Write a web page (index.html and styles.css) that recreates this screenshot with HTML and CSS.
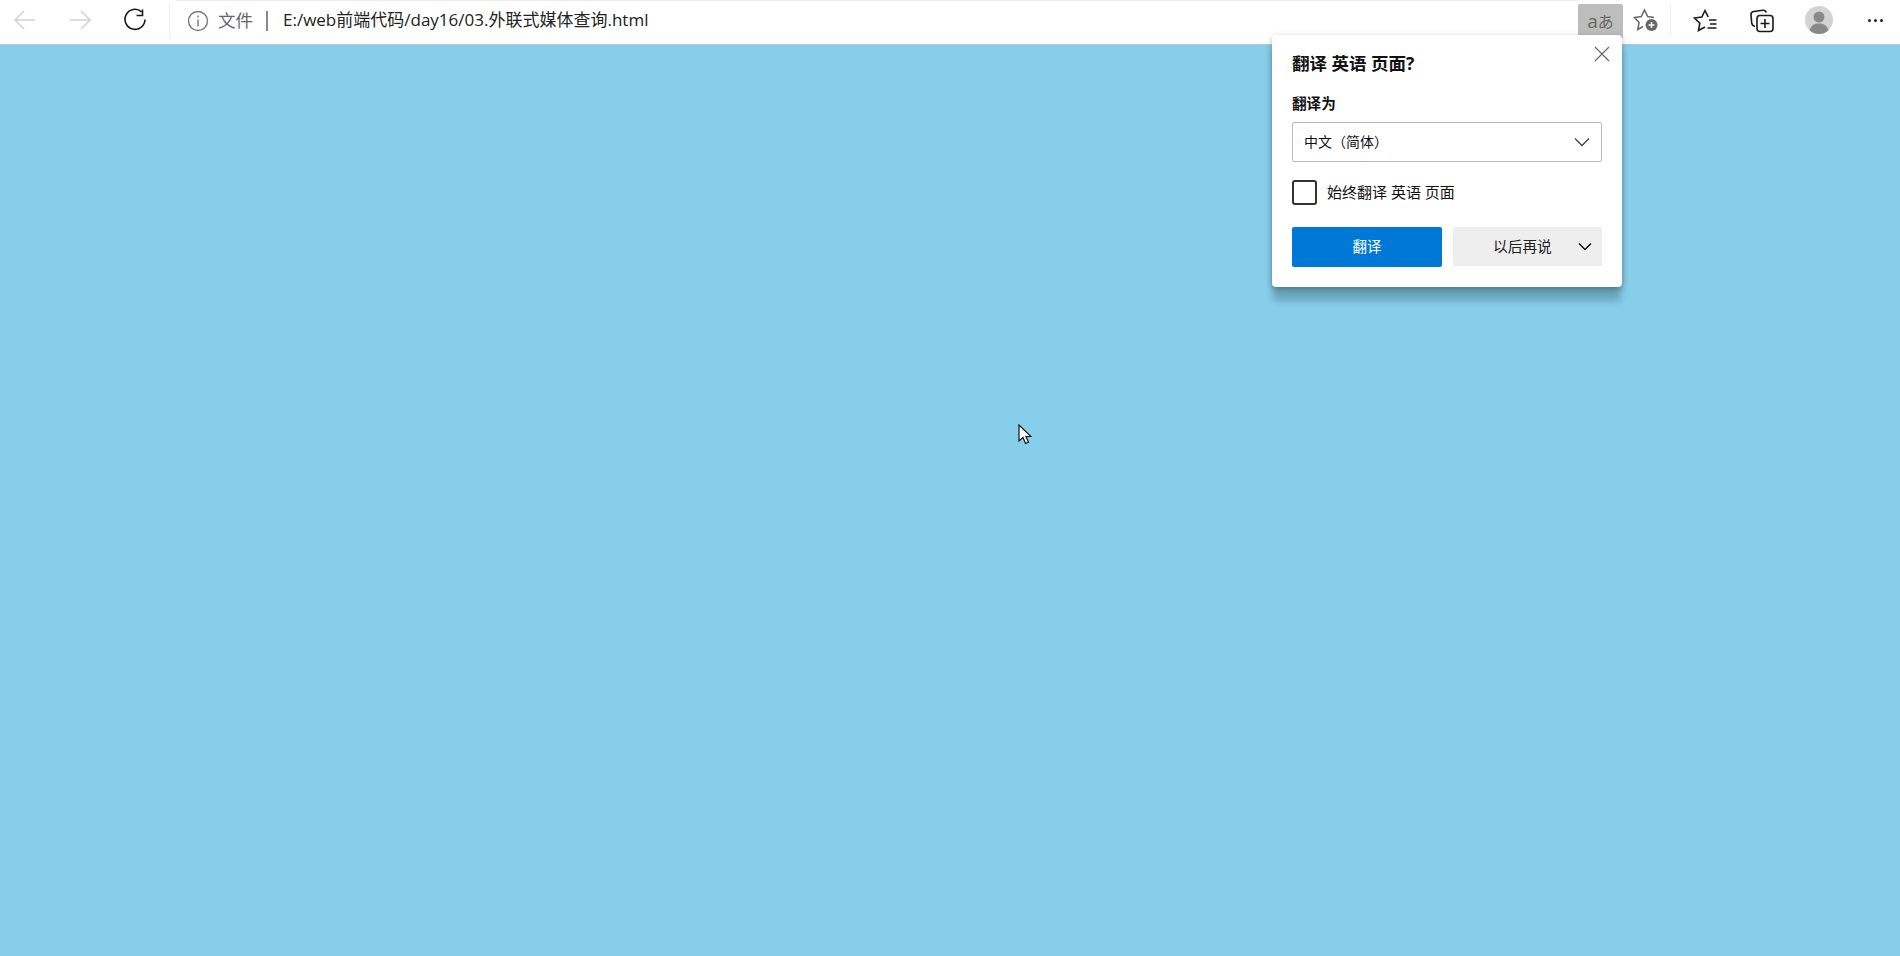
FILE: index.html
```html
<!DOCTYPE html>
<html lang="zh-CN">
<head>
  <meta charset="UTF-8">
  <title>03.外联式媒体查询</title>
  <link rel="stylesheet" href="styles.css">
</head>
<body>
  <header class="toolbar">
    <div class="nav-group">
      <button class="icon-btn">
        <svg width="24" height="24" viewBox="0 0 24 24" class="stroke-light"><path d="M22 12H2M11 3l-9 9 9 9"/></svg>
      </button>
      <button class="icon-btn">
        <svg width="24" height="24" viewBox="0 0 24 24" class="stroke-light"><path d="M2 12h20M13 3l9 9-9 9"/></svg>
      </button>
      <button class="icon-btn">
        <svg width="24" height="24" viewBox="0 0 24 24" class="stroke-dark"><path d="M18.6 3.8A10 10 0 1 0 22 11.5"/><path d="M13.5 7.5h6v-6"/></svg>
      </button>
    </div>
    <div class="address">
      <svg class="info-icon" width="22" height="22" viewBox="0 0 22 22"><circle cx="11" cy="11" r="9.5"/><path d="M11 9.5v7M11 5.5v2"/></svg>
      <span class="scheme">文件</span>
      <span class="divider"></span>
      <span class="url">E:/web前端代码/day16/03.外联式媒体查询.html</span>
    </div>
    <div class="actions">
      <button class="translate-btn"><span class="latin-a">a</span>あ</button>
      <button class="icon-btn star-btn">
        <svg width="26" height="26" viewBox="0 0 26 26"><path class="star-line" d="M10 19.5l-5.2 3 1.3-7L1.500 10.500l6.800-.9L11.500 3l3.200 6.600 6.300.9"/><circle cx="18.500" cy="18" r="6" fill="#666"/><path d="M18.500 15v6M15.500 18h6" stroke="#fff" stroke-width="1.500"/></svg>
      </button>
      <span class="sep"></span>
      <button class="icon-btn action-btn">
        <svg width="26" height="26" viewBox="0 0 26 26" class="stroke-dark"><path d="M12 20l-6.500 3.500 1.300-7.300L1.500 11l7.300-1L12 3.500l3.200 6.500M16 13h7.500M17 17h6.500M14.500 21h9"/></svg>
      </button>
      <button class="icon-btn action-btn">
        <svg width="26" height="26" viewBox="0 0 26 26" class="stroke-dark"><path d="M6 19.500c-1.800-.5-3-1.500-3.300-3.500L2 8c-.2-2 .8-3.200 2.800-3.500l9-1.200c1.700-.2 3 .5 3.500 2.200"/><rect x="8" y="8.500" width="16" height="16" rx="3"/><path d="M16 12v9M11.500 16.500h9"/></svg>
      </button>
      <button class="icon-btn action-btn">
        <span class="avatar">
          <svg width="28" height="28" viewBox="0 0 28 28"><circle cx="14" cy="11" r="5.500" fill="#8a8a8a"/><path d="M4.500 25c1-5 4-7.500 9.500-7.500s8.500 2.500 9.500 7.500a14 14 0 0 1-19 0z" fill="#8a8a8a"/></svg>
        </span>
      </button>
      <button class="icon-btn more-btn">
        <span class="dot"></span><span class="dot"></span><span class="dot"></span>
      </button>
    </div>
  </header>

  <section class="popup">
    <button class="close-btn">
      <svg width="16" height="16" viewBox="0 0 16 16"><path d="M1 1l14 14M15 1L1 15"/></svg>
    </button>
    <h2 class="popup-title">翻译 英语 页面?</h2>
    <div class="field-label">翻译为</div>
    <div class="select">
      <span class="select-text">中文（简体）</span>
      <svg class="chevron" width="16" height="10" viewBox="0 0 16 10"><path d="M1 1.500l7 7 7-7"/></svg>
    </div>
    <label class="check-row">
      <span class="checkbox"></span>
      <span class="check-text">始终翻译 英语 页面</span>
    </label>
    <div class="button-row">
      <button class="primary">翻译</button>
      <button class="secondary">
        <span class="secondary-text">以后再说</span>
        <svg class="chevron dark" width="14" height="9" viewBox="0 0 14 9"><path d="M1 1.500l6 6 6-6"/></svg>
      </button>
    </div>
  </section>

  <svg class="cursor" width="14" height="22" viewBox="0 0 14 22"><path d="M1 1v16l4-3.500 2.500 6 3-1.300-2.500-5.700h5z" fill="#fff" stroke="#111" stroke-width="1.200"/></svg>
</body>
</html>
```

FILE: styles.css
```css
/* Page */
* {
  box-sizing: border-box;
}

body {
  margin: 0;
  height: 956px;
  overflow: hidden;
  background-color: #87ceeb;
  font-family: "Open Sans", "Noto Sans CJK SC", sans-serif;
  color: #111;
}

button {
  border: none;
  background: none;
  padding: 0;
  font-family: inherit;
}

svg {
  display: block;
  fill: none;
}

/* Browser toolbar */
.toolbar {
  display: flex;
  height: 45px;
  background-color: #fff;
  border-bottom: 1px solid #b9c4ca;
}

.nav-group {
  display: grid;
  grid-template-columns: 50px 60px 50px;
  width: 176px;
}

.icon-btn {
  display: flex;
  align-items: center;
  justify-content: center;
  height: 40px;
}

.stroke-light path {
  stroke: #d2d2d2;
  stroke-width: 1.500;
}

.stroke-dark path,
.stroke-dark rect {
  stroke: #1a1a1a;
  stroke-width: 1.600;
  fill: none;
}

.address {
  flex: 1;
  display: flex;
  align-items: center;
  height: 40px;
  border-top: 1px solid #eee;
  padding-left: 10px;
  position: relative;
}

.address::before {
  content: "";
  width: 1px;
  height: 34px;
  background-color: #eee;
  margin-left: -17px;
  margin-right: 17px;
}

.info-icon circle,
.info-icon path {
  stroke: #777;
  stroke-width: 1.400;
}

.scheme {
  font-size: 17.500px;
  color: #666;
  margin-left: 9px;
  padding-bottom: 3px;
}

.divider {
  width: 2px;
  height: 20px;
  background-color: #888;
  margin: 0 15px 0 13px;
}

.url {
  font-size: 17px;
  color: #222;
  white-space: nowrap;
  padding-bottom: 5px;
}

.actions {
  display: flex;
  align-items: flex-start;
  width: 322px;
}

.translate-btn {
  width: 45px;
  height: 35px;
  margin-top: 4px;
  background-color: #bdbdbd;
  border-radius: 2px;
  font-size: 16px;
  color: #666;
  line-height: 30px;
}

.latin-a {
  font-size: 19px;
}

.star-btn {
  width: 46px;
}

.star-line {
  stroke: #666;
  stroke-width: 1.500;
}

.sep {
  width: 1px;
  height: 34px;
  margin: 3px 7px 0 1px;
  background-color: #eee;
}

.action-btn {
  width: 56px;
}

.avatar {
  width: 28px;
  height: 28px;
  margin-left: 1px;
  border-radius: 50%;
  overflow: hidden;
  background-color: #d3d3d3;
}

.more-btn {
  width: 50px;
  margin-left: 4px;
  gap: 3px;
}

.dot {
  width: 3px;
  height: 3px;
  border-radius: 50%;
  background-color: #222;
}

/* Translate popup */
.popup {
  position: absolute;
  top: 35px;
  left: 1272px;
  width: 350px;
  height: 252px;
  padding: 0 20px;
  background-color: #fff;
  border-radius: 4px;
  box-shadow: 0 15px 7px -1px rgba(0, 0, 0, 0.2), 0 2px 6px rgba(0, 0, 0, 0.3);
}

.close-btn {
  position: absolute;
  top: 11px;
  right: 12px;
}

.close-btn path {
  stroke: #666;
  stroke-width: 1.200;
}

.popup-title {
  margin: 15px 0 0;
  font-size: 17.500px;
  font-weight: 700;
  line-height: 26px;
  color: #111;
}

.field-label {
  margin-top: 17px;
  font-size: 14.600px;
  font-weight: 700;
  line-height: 20px;
}

.select {
  display: flex;
  align-items: center;
  justify-content: space-between;
  height: 40px;
  margin-top: 9px;
  padding: 0 11px;
  border: 1px solid #bbb;
  border-radius: 2px;
  font-size: 14px;
}

.select-text {
  padding-bottom: 3px;
}

.chevron path {
  stroke: #444;
  stroke-width: 1.300;
}

.chevron.dark path {
  stroke: #111;
  stroke-width: 1.500;
}

.check-row {
  display: flex;
  align-items: center;
  gap: 10px;
  margin-top: 18px;
  font-size: 15px;
}

.check-text {
  padding-bottom: 2px;
}

.checkbox {
  width: 25px;
  height: 25px;
  border: 2px solid #333;
  border-radius: 3px;
}

.button-row {
  display: flex;
  gap: 11px;
  margin-top: 22px;
}

.primary {
  width: 150px;
  height: 40px;
  padding-bottom: 3px;
  background-color: #0078d7;
  border-radius: 2px;
  font-size: 14.500px;
  color: #fff;
}

.secondary {
  position: relative;
  display: flex;
  align-items: center;
  width: 149px;
  height: 39px;
  padding-left: 40px;
  background-color: #eee;
  font-size: 14.700px;
  color: #222;
}

.secondary-text {
  padding-bottom: 3px;
}

.secondary .chevron {
  margin-left: 26px;
}

/* Mouse pointer */
.cursor {
  position: absolute;
  top: 424px;
  left: 1018px;
}
```
